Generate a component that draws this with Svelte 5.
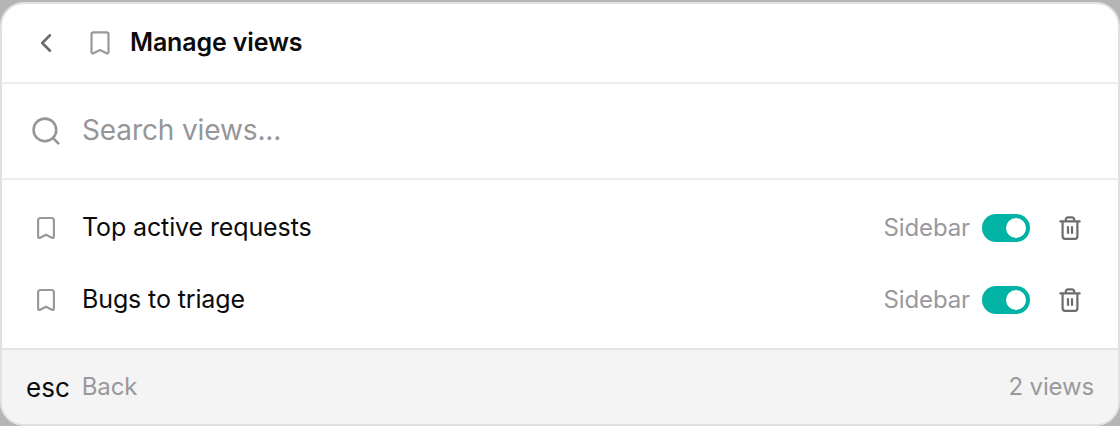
<script>
	let query = '';
	let views = [
		{ name: 'Top active requests', sidebar: true },
		{ name: 'Bugs to triage', sidebar: true }
	];

	$: visible = views.filter((view) => view.name.toLowerCase().includes(query.toLowerCase()));

	function remove(view) {
		views = views.filter((v) => v !== view);
	}
</script>

<div class="backdrop">
	<div class="dialog">
		<header>
			<button class="back" aria-label="Back">
				<svg width="28" height="28" viewBox="0 0 28 28">
					<path d="M18 6.3 10.200 14l7.800 7.700" stroke-width="2.6" />
				</svg>
			</button>
			<svg class="mark" width="28" height="28" viewBox="0 0 28 28">
				<path d="M5.500 5.500a2.200 2.200 0 0 1 2.200-2.200h12.600a2.200 2.200 0 0 1 2.200 2.200v17.600c0 1.200-1 1.700-2 1.200L14 21.100l-6.500 3.200c-1 .5-2 0-2-1.200z" stroke-width="2.200" />
			</svg>
			<h1>Manage views</h1>
		</header>

		<label class="search">
			<svg width="32" height="32" viewBox="0 0 32 32">
				<circle cx="14.900" cy="14.900" r="11.300" stroke-width="2.600" />
				<path d="m23.100 23.100 5.200 5.200" stroke-width="2.600" />
			</svg>
			<input type="text" placeholder="Search views..." bind:value={query} />
		</label>

		<ul>
			{#each visible as view}
				<li>
					<svg class="mark" width="28" height="28" viewBox="0 0 28 28">
						<path d="M6.100 6.200A2.200 2.200 0 0 1 8.300 4h11.400a2.200 2.200 0 0 1 2.200 2.200v16.300c0 1.100-1 1.700-2 1.200L14 20.700l-5.900 3c-1 .5-2-.1-2-1.200z" stroke-width="2.200" />
					</svg>
					<span class="name">{view.name}</span>
					<span class="hint">Sidebar</span>
					<button
						class="toggle"
						class:on={view.sidebar}
						aria-label="Show in sidebar"
						on:click={() => (view.sidebar = !view.sidebar)}
					>
						<i></i>
					</button>
					<button class="delete" aria-label="Delete view" on:click={() => remove(view)}>
						<svg width="28" height="28" viewBox="0 0 28 28">
							<path d="M4.300 7.300h19.400M9.800 7.300V5.800a2.500 2.500 0 0 1 2.500-2.500h3.400a2.500 2.500 0 0 1 2.500 2.500v1.500M6.600 7.300v14.900a2.600 2.600 0 0 0 2.600 2.600h9.600a2.600 2.600 0 0 0 2.600-2.600V7.300M12 13v6M16 13v6" stroke-width="2.200" />
						</svg>
					</button>
				</li>
			{/each}
		</ul>

		<footer>
			<kbd>esc</kbd>
			<span class="action">Back</span>
			<span class="count">{visible.length} views</span>
		</footer>
	</div>
</div>

<style>
	:global(body) {
		background: #b5b5b5;
	}
	.backdrop {
		height: 426px;
		padding-top: 2px;
		box-sizing: border-box;
		font-family: Inter, 'Liberation Sans', sans-serif;
		color: #0b0b0c;
	}
	.dialog {
		height: 424px;
		display: flex;
		flex-direction: column;
		box-sizing: border-box;
		border: 2px solid #e1e1e1;
		border-radius: 24px;
		background: #fff;
		overflow: hidden;
	}
	svg {
		display: block;
		flex: none;
		fill: none;
		stroke: currentColor;
		stroke-linecap: round;
		stroke-linejoin: round;
	}
	button {
		padding: 0;
		border: 0;
		background: none;
		cursor: pointer;
	}
	header {
		height: 78px;
		display: flex;
		align-items: center;
		padding-left: 30px;
		border-bottom: 2px solid #ededed;
	}
	.back {
		margin-right: 26px;
		color: #6b6c70;
	}
	.mark {
		color: #99999d;
	}
	h1 {
		margin: 0 0 0 16px;
		padding-bottom: 2px;
		font-size: 25px;
		font-weight: 600;
		letter-spacing: -0.15px;
	}
	.search {
		height: 94px;
		display: flex;
		align-items: center;
		padding-left: 28px;
		border-bottom: 2px solid #ededed;
		color: #95969a;
	}
	input {
		flex: 1;
		margin-left: 20px;
		padding: 0 0 2px;
		border: 0;
		outline: none;
		font: 28px Inter, 'Liberation Sans', sans-serif;
		letter-spacing: -0.12px;
		color: #0b0b0c;
	}
	input::placeholder {
		color: #95969a;
	}
	ul {
		flex: 1;
		margin: 0;
		padding: 12px 34px 12px 30px;
		list-style: none;
	}
	li {
		height: 72px;
		display: flex;
		align-items: center;
	}
	.name {
		flex: 1;
		margin-left: 22px;
		padding-bottom: 2px;
		font-size: 25px;
		letter-spacing: -0.12px;
	}
	.hint {
		padding-bottom: 2px;
		font-size: 24px;
		letter-spacing: -0.12px;
		color: #99999d;
	}
	.toggle {
		width: 48px;
		height: 28px;
		display: flex;
		align-items: center;
		box-sizing: border-box;
		margin: 0 26px 0 12px;
		padding: 4px;
		border-radius: 14px;
		background: #d4d4d6;
	}
	.toggle.on {
		justify-content: flex-end;
		background: #00b3a4;
	}
	.toggle i {
		width: 20px;
		height: 20px;
		border-radius: 50%;
		background: #fff;
	}
	.delete {
		color: #6b6c70;
	}
	footer {
		height: 74px;
		display: flex;
		align-items: center;
		padding: 0 24px;
		border-top: 2px solid #e4e4e4;
		background: #f4f4f4;
		font-size: 24px;
		letter-spacing: -0.15px;
		color: #99999d;
	}
	kbd {
		margin-right: 12px;
		font: 26px Inter, 'Liberation Sans', sans-serif;
		letter-spacing: 0;
		color: #0b0b0c;
	}
	.action,
	.count {
		padding-bottom: 2px;
	}
	.count {
		margin-left: auto;
	}
</style>
